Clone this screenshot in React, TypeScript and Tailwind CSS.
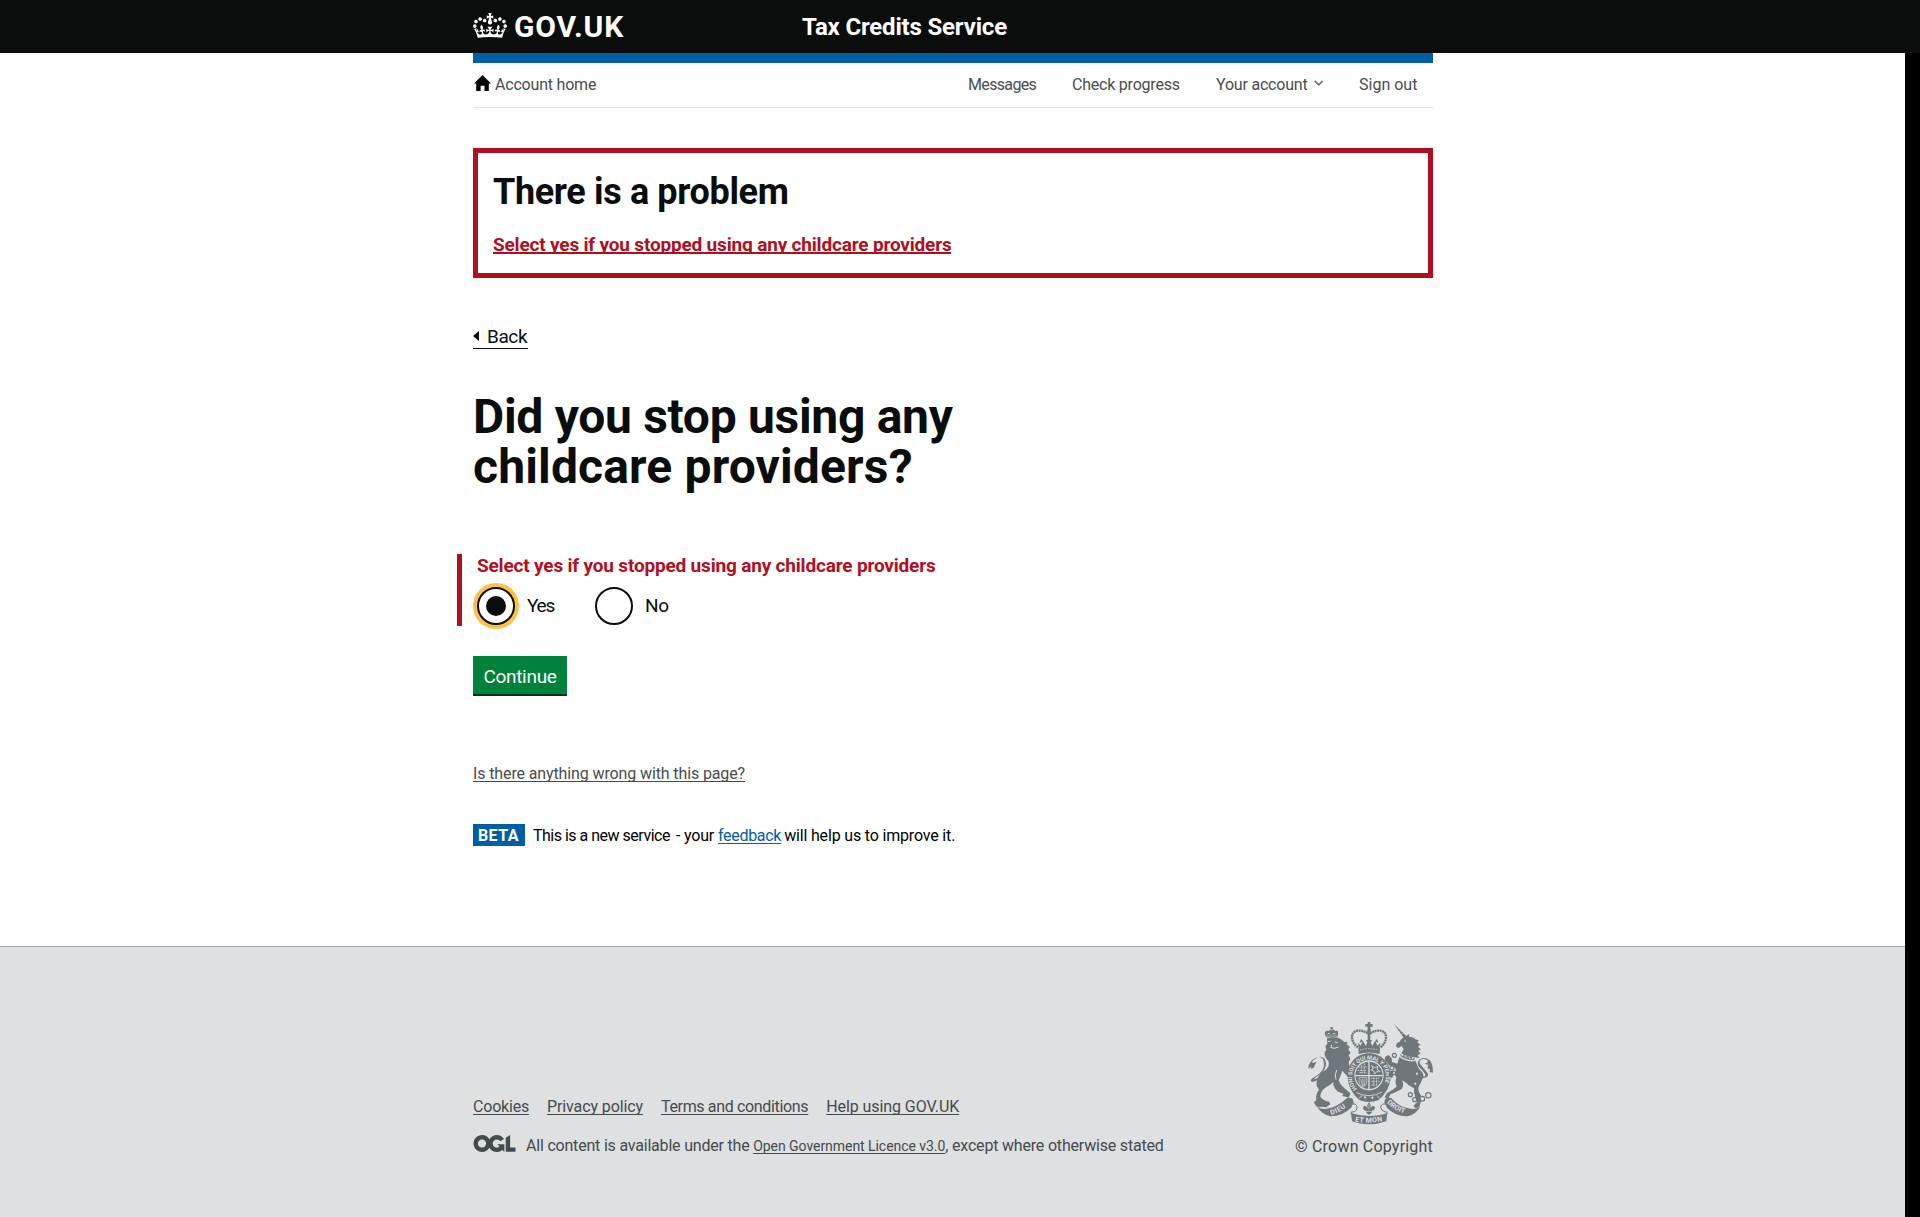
function Crown() {
  return (
    <svg viewBox="0 0 132 97" className="mt-[-2px] h-[25px] w-[34px] shrink-0" fill="currentColor" fillRule="evenodd" aria-hidden="true">
      <path d="M25 30.2c3.5 1.5 7.7-.2 9.1-3.7 1.5-3.6-.2-7.8-3.9-9.2-3.6-1.4-7.6.3-9.1 3.9-1.4 3.5.3 7.5 3.9 9zM9 39.5c3.6 1.5 7.8-.2 9.2-3.7 1.5-3.6-.2-7.8-3.9-9.1-3.6-1.5-7.6.2-9.1 3.8-1.4 3.5.3 7.5 3.8 9zM4.4 57.2c3.5 1.5 7.7-.2 9.1-3.8 1.5-3.6-.2-7.7-3.9-9.1-3.5-1.5-7.6.3-9.1 3.8-1.4 3.5.3 7.6 3.9 9.1zm38.3-21.4c3.5 1.5 7.7-.2 9.1-3.8 1.5-3.6-.2-7.7-3.9-9.1-3.6-1.5-7.6.3-9.1 3.8-1.3 3.6.4 7.7 3.9 9.1zm64.4-5.6c-3.6 1.5-7.8-.2-9.1-3.7-1.5-3.6.2-7.8 3.8-9.2 3.6-1.4 7.7.3 9.2 3.9 1.3 3.5-.4 7.5-3.9 9zm15.9 9.3c-3.6 1.5-7.7-.2-9.1-3.7-1.5-3.6.2-7.8 3.7-9.1 3.6-1.5 7.7.2 9.2 3.8 1.5 3.5-.3 7.5-3.8 9zm4.7 17.7c-3.6 1.5-7.8-.2-9.2-3.8-1.5-3.6.2-7.7 3.9-9.1 3.6-1.5 7.7.3 9.2 3.8 1.3 3.5-.4 7.6-3.9 9.1zM89.3 35.8c-3.6 1.5-7.8-.2-9.2-3.8-1.4-3.6.2-7.7 3.9-9.1 3.6-1.5 7.7.3 9.2 3.8 1.4 3.6-.3 7.7-3.9 9.1zM69.7 17.7l8.9 4.7V9.3l-8.9 2.8c-.2-.3-.5-.6-.9-.9L72.4 0H59.6l3.5 11.2c-.3.3-.6.5-.9.9l-8.8-2.8v13.1l8.8-4.7c.3.3.6.7.9.9l-5 15.4v.1c-.2.8-.4 1.6-.4 2.4 0 4.1 3.1 7.5 7 8.1h.2c.3 0 .7.1 1 .1.4 0 .7 0 1-.1h.2c4-.6 7.1-4.1 7.1-8.1 0-.8-.1-1.7-.4-2.4V34l-5.1-15.4c.4-.2.7-.6 1-.9zM66 92.8c16.9 0 32.8 1.1 47.1 3.2 4-16.9 8.9-26.7 14-33.5l-9.6-3.4c1 4.9 1.1 7.2 0 10.2-1.5-1.4-3-4.3-4.2-8.7L108.6 76c2.8-2 5-3.2 7.5-3.3-4.4 9.4-10 11.9-13.6 11.2-4.3-.8-6.3-4.6-5.6-7.9 1-4.7 5.7-5.9 8-.5 4.3-8.7-3-11.4-7.6-8.8 7.1-7.2 7.9-13.5 2.1-21.1-8 6.1-8.1 12.3-4.5 20.8-4.7-5.4-12.1-2.5-9.5 6.2 3.4-5.2 7.9-2 7.2 3.1-.6 4.3-6.4 7.8-13.5 7.2-10.3-.9-10.9-8-11.2-13.8 2.5-.5 7.1 1.8 11 7.3L80.2 60c-4.1 4.4-8 5.3-12.3 5.4 1.4-4.4 8-11.6 8-11.6H55.5s6.4 7.2 7.9 11.6c-4.2-.1-8-1-12.3-5.4l1.4 16.4c3.9-5.5 8.5-7.7 10.9-7.3-.3 5.8-.9 12.8-11.1 13.8-7.2.6-12.9-2.9-13.5-7.2-.7-5 3.8-8.3 7.1-3.1 2.7-8.7-4.6-11.6-9.4-6.2 3.7-8.5 3.6-14.7-4.6-20.8-5.8 7.6-5 13.9 2.2 21.1-4.7-2.6-11.9.1-7.7 8.8 2.3-5.5 7.1-4.2 8.1.5.7 3.3-1.3 7.1-5.7 7.9-3.5.7-9-1.8-13.5-11.2 2.5.1 4.7 1.3 7.5 3.3l-4.7-15.4c-1.2 4.4-2.7 7.2-4.3 8.7-1.1-3-.9-5.3 0-10.2l-9.5 3.4c5 6.9 9.9 16.7 14 33.5 14.8-2.1 30.8-3.2 47.7-3.2z" />
    </svg>
  );
}

function HomeIcon() {
  return (
    <svg viewBox="0 0 17 16" className="ml-px h-4 w-[17px] shrink-0" fill="#000" aria-hidden="true">
      <path d="M8.500 0 17 8.500h-2.200V16h-4.300v-5.200H6.600V16H2.200V8.500H0z" />
    </svg>
  );
}

function OglLogo() {
  return (
    <svg viewBox="0 0 483.2 195.7" className="mt-[-1px] h-[17px] w-[43px] shrink-0" fill="currentColor" aria-hidden="true">
      <path d="M421.5 142.8V.1l-50.7 32.3v161.1h112.4v-50.7zm-122.3-9.6A47.12 47.12 0 0 1 221 97.8c0-26 21.1-47.1 47.1-47.1 16.700 0 31.400 8.700 39.700 21.800l42.700-27.200A97.630 97.630 0 0 0 268.100 0c-36.500 0-68.300 20.100-85.100 49.700A98 98 0 0 0 97.800 0C43.900 0 0 43.900 0 97.800s43.900 97.800 97.800 97.800c36.500 0 68.300-20.100 85.100-49.700a97.760 97.760 0 0 0 149.600 25.400l19.400 22.200h3v-87.800h-80l24.300 27.500zM97.800 145c-26 0-47.100-21.100-47.100-47.100s21.100-47.100 47.100-47.100 47.100 21.100 47.100 47.100S123.800 145 97.800 145" />
    </svg>
  );
}

const INK = "#6f777b";
const PAPER = "#dee0e2";

function RoyalArms() {
  return (
    <svg viewBox="84 36 375 306" className="h-[102px] w-[125px] overflow-visible" fill={INK} aria-hidden="true">
      <defs>
        <path id="garter" d="M231 236 A51 51 0 1 1 303 236" />
        <path id="motto-left" d="M154 315 Q186 306 212 278" />
        <path id="motto-mid" d="M225 335 Q267 342 313 333" />
        <path id="motto-right" d="M320 278 Q347 306 384 313" />
      </defs>

      {/* lion's crown */}
      <path d="M139 82 C130 66 136 60 146 63 Q152 56 155 62 Q160 55 165 63 Q176 60 174 67 Q176 72 172 82 Z" />
      <circle cx="155" cy="55" r="4" />
      <path d="M143 73 q3 -8 7 0 M159 73 q4 -8 8 0" stroke={PAPER} strokeWidth="3" fill="none" />
      <path d="M138 78 h35" stroke={PAPER} strokeWidth="1.500" />
      {/* lion's head, mane and body */}
      <path d="M141 85 Q156 79 174 83 Q185 87 193 96 L203 95 L200 103 L209 110 L205 119 L212 128 L206 136 L211 147 L206 156 L209 170 Q204 177 214 186 L213 201 L205 207 L202 199 L187 182 Q181 199 176 211 Q182 228 199 239 L211 250 L207 263 L187 258 L190 251 L174 245 Q158 232 160 216 Q150 226 139 231 Q121 242 121 260 Q131 273 148 275 L151 283 L139 292 L125 290 L119 292 L108 289 L102 277 L109 270 Q106 253 117 239 Q105 227 112 207 Q118 189 136 181 Q151 168 145 153 Q133 143 134 125 L139 120 L136 109 L142 101 Z" />
      <path d="M144 95 L152 93 M164 96 L173 98 M151 112 L163 115 L175 111 M155 104 L154 110" stroke={PAPER} strokeWidth="3" fill="none" />
      <path d="M170 180 Q163 195 168 209" stroke={PAPER} strokeWidth="3" fill="none" />
      <path d="M116 208 Q97 220 93 213 Q90 207 105 200 Q132 184 132 165 Q132 140 116 141 Q104 145 94 157 Q104 160 110 154 L101 173 L93 178 L94 170 L84 176 Q87 154 105 145 Q122 135 132 145 Q141 157 136 172 Q131 188 113 198 Q103 204 103 208 Q108 208 120 199 Z" />

      {/* imperial crown */}
      <path d="M263 36 h8 v6 h7 v8 h-7 v8 h-8 v-8 h-7 v-8 h7 z" />
      <circle cx="267" cy="62" r="6" />
      <path d="M234 112 Q218 101 216 84 Q215 66 232 62 Q251 60 267 73 Q283 60 302 62 Q319 66 318 84 Q316 101 301 112" fill="none" stroke={INK} strokeWidth="7" strokeDasharray="6 1.500" />
      <path d="M263 66 h8 v35 h-8 z" />
      <path d="M234 98 L242 107 L247 95 L239 98 L243 86 L252 98 L257 108 L262 98 L258 90 L276 90 L272 98 L277 108 L282 98 L291 86 L295 98 L287 95 L292 107 L301 98 L298 119 L237 119 Z" />
      <path d="M235 115 Q267 106 300 115 L299 132 Q267 123 236 132 Z" />
      <path d="M240 120 Q267 112 295 120" stroke={PAPER} strokeWidth="2" strokeDasharray="5 3" fill="none" />

      {/* garter and shield */}
      <path fillRule="evenodd" d="M267 130 C304 130 332 160 332 198 C332 232 311 257 295 271 Q267 281 239 271 C219 253 203 229 203 197 C203 160 230 130 267 130 Z M267 151 A44 45 0 1 0 267 241 A44 45 0 1 0 267 151 Z" />
      <circle cx="267" cy="196" r="41" />
      <path d="M267 155 v82 M226 197 h82" stroke={PAPER} strokeWidth="4" />
      <path d="M235 171 h26 M233 181 h28 M238 188 h23 M244 164 v25 M253 160 v30" stroke={PAPER} strokeWidth="2.200" strokeDasharray="5 2" />
      <path d="M273 205 h25 M273 215 h27 M273 225 h20 M281 203 v28 M290 203 v24" stroke={PAPER} strokeWidth="2.200" strokeDasharray="5 2" />
      <path d="M275 167 l9 6 10 -4 -3 9 9 7 -10 0 -6 7 -3 -9 -8 -4 7 -3 z" fill="none" stroke={PAPER} strokeWidth="2.500" />
      <path d="M238 203 q-5 20 12 29 q14 -11 10 -29 z M243 207 q0 12 7 22 M249 206 v22 M255 206 q1 13 -3 22" fill="none" stroke={PAPER} strokeWidth="2" />
      <path d="M230 248 Q267 267 306 246 M236 266 l10 -9 M300 266 l-10 -10" fill="none" stroke={PAPER} strokeWidth="2.500" />
      <path d="M251 262 l4 -4 4 4 -4 4 z M273 263 l4 -4 4 4 -4 4 z" fill={PAPER} />
      <text fill={PAPER} fontFamily="Roboto, sans-serif" fontWeight="700" fontSize="17" letterSpacing="-0.3">
        <textPath href="#garter">HONI SOIT QUI MAL Y PENSE</textPath>
      </text>

      {/* unicorn */}
      <path d="M342 42 L379 78 L371 83 Z" />
      <path d="M348 48 l3 0 M353 56 l5 -1 M359 64 l6 -2 M364 72 l8 -3" stroke={PAPER} strokeWidth="1.500" />
      <path d="M380 77 L388 72 L387 80 Q401 80 406 88 L416 91 L412 97 L421 104 L414 110 L423 119 L414 122 L422 131 L413 135 L418 145 L405 142 Q380 141 364 130 L371 118 L365 108 L356 114 L348 110 L350 100 L359 95 Q364 83 380 77 Z" />
      <circle cx="375" cy="93" r="2.500" fill={PAPER} />
      <path d="M361 131 l6 8 5 -8 5 11 7 -9 3 11 8 -7 2 10 8 -5 -2 9 Q381 151 362 139 Z" />
      <path d="M366 133 Q386 148 408 147" stroke={PAPER} strokeWidth="2.500" strokeDasharray="5 3" fill="none" />
      <path d="M358 141 Q383 158 407 153 Q411 168 420 180 Q431 188 430 201 L421 221 Q412 232 417 247 L429 267 L422 277 L418 291 L408 295 L400 288 L411 277 L407 264 Q400 250 402 235 L386 226 Q378 217 366 211 Q373 226 365 237 L343 248 L331 253 L324 268 L314 262 L322 248 L337 240 L350 230 Q344 215 349 203 L343 191 L336 205 L326 195 L327 184 L339 182 L348 184 L346 174 L327 166 L314 150 L315 141 L325 135 L335 145 L336 156 L352 161 Z" />
      <path d="M425 203 Q449 205 443 190 Q434 178 421 163 Q413 149 431 147 Q443 148 444 156 L435 161 L445 165 L442 175 L450 178 L449 186 L459 188 Q459 160 448 150 Q432 139 418 149 Q408 161 420 174 Q437 190 436 197 Q430 201 423 196 Z" />
      <g fill={PAPER} stroke={INK} strokeWidth="3.500">
        <circle cx="343" cy="136" r="6" />
        <circle cx="336" cy="174" r="6" />
        <circle cx="342" cy="189" r="5" />
        <circle cx="411" cy="191" r="5" />
        <circle cx="406" cy="221" r="5" />
        <circle cx="391" cy="254" r="6" />
        <circle cx="404" cy="269" r="6" />
        <circle cx="427" cy="266" r="7" />
        <circle cx="445" cy="256" r="8" />
      </g>

      {/* motto ribbon */}
      <path d="M111 290 Q126 300 147 295 Q175 289 201 264 L216 265 Q226 277 216 291 Q188 319 152 319 Q127 314 111 290 Z" />
      <path d="M421 290 Q405 301 385 295 Q355 289 333 263 L318 265 Q308 277 317 290 Q347 320 382 319 Q407 314 421 290 Z" />
      <path d="M216 283 Q229 279 231 291 Q232 303 219 306 Q214 302 213 312 M318 283 Q304 279 302 291 Q303 303 316 306 Q321 302 322 312" fill={PAPER} stroke={INK} strokeWidth="3" />
      <path d="M213 309 Q239 318 267 318 Q298 318 322 309 L319 334 Q295 343 267 343 Q239 343 216 334 Z" />
      <path d="M267 277 Q275 285 271 295 Q279 283 284 290 Q287 298 276 303 L275 308 L267 315 L259 308 L258 303 Q247 298 250 290 Q255 283 263 295 Q259 285 267 277 Z" />
      <path d="M258 304 h18 M267 283 v14" stroke={PAPER} strokeWidth="2" />
      <g fill={PAPER} fontFamily="Roboto, sans-serif" fontWeight="700" fontSize="21">
        <text letterSpacing="1.500"><textPath href="#motto-left">DIEU</textPath></text>
        <text letterSpacing="1"><textPath href="#motto-mid">ET MON</textPath></text>
        <text letterSpacing="0.500"><textPath href="#motto-right">DROIT</textPath></text>
      </g>
    </svg>
  );
}

const fine = "underline decoration-1 underline-offset-[2px] [text-decoration-skip-ink:none]";

export default function App() {
  return (
    <div className="h-[1217px] w-[1920px] overflow-hidden bg-black font-[Roboto,sans-serif] text-base leading-5 text-[#0b0c0c]">
      <div className="flex h-full w-[1905px] flex-col bg-white">
        <header className="-mr-[15px] h-[53px] bg-[#0b0c0c] text-white">
          <div className="ml-[473px] flex h-[53px] w-[960px] items-center font-bold leading-[53px]">
            <a className="flex w-[329px] items-center">
              <Crown />
              <span className="ml-[7px] text-[30px] tracking-[0.9px]">GOV.UK</span>
            </a>
            <span className="pt-[2px] text-2xl leading-[53px] tracking-[-0.18px]">Tax Credits Service</span>
          </div>
        </header>

        <main className="ml-[473px] w-[960px]">
          <div className="h-[10px] bg-[#005ea5]" />
          <nav className="flex h-[45px] items-start border-b border-[#dee0e2] leading-[43px] text-[#494c4e]">
            <a className="flex gap-1 tracking-[-0.2px]">
              <span className="flex pt-[12px]"><HomeIcon /></span>
              Account home
            </a>
            <div className="ml-auto flex gap-9 pr-4">
              <a className="w-[68px] whitespace-nowrap tracking-[-0.65px]">Messages</a>
              <a className="w-[108px] whitespace-nowrap tracking-[-0.22px]">Check progress</a>
              <a className="flex w-[107px] items-start whitespace-nowrap tracking-[-0.2px]">
                Your account
                <svg viewBox="0 0 10 6" className="ml-[6px] mt-[17px] h-[6px] w-[10px]" fill="none" stroke="#6f777b" strokeWidth="1.800" aria-hidden="true">
                  <path d="M.7.700 5 5 9.300.700" />
                </svg>
              </a>
              <a className="w-[58px] whitespace-nowrap">Sign out</a>
            </div>
          </nav>

          <section className="mt-10 h-[130px] border-[5px] border-[#b10e1e] px-[15px] pt-[19px]">
            <h2 className="text-4xl leading-10 font-bold tracking-[-0.36px]">There is a problem</h2>
            <a className="mt-[21px] block h-[21px] w-[458px] overflow-hidden border-b-2 border-[#b10e1e] text-[19px] leading-6 font-bold whitespace-nowrap tracking-[-0.18px] text-[#b10e1e]">
              Select yes if you stopped using any childcare providers
            </a>
          </section>

          <a className="mt-[46px] flex h-[25px] w-[55px] items-start border-b border-[#0b0c0c] text-[19px] leading-[26px] tracking-[-0.4px]">
            <svg viewBox="0 0 6 10" className="mt-[7px] mr-2 h-[10px] w-[6px] shrink-0" fill="currentColor" aria-hidden="true">
              <path d="M6 0v10L0 5z" />
            </svg>
            Back
          </a>

          <h1 className="mt-[43px] w-[640px] text-5xl leading-[50px] font-bold">
            <span className="tracking-[-0.3px]">Did you stop using any</span>
            <br />
            <span className="tracking-[0.15px]">childcare providers?</span>
          </h1>

          <fieldset className="mt-[62px] -ml-4 h-[72px] border-l-[5px] border-[#b10e1e] pl-[15px] text-[19px] leading-6">
            <p className="font-bold whitespace-nowrap tracking-[-0.18px] text-[#b10e1e]">
              Select yes if you stopped using any childcare providers
            </p>
            <div className="mt-[9px] flex">
              <label className="flex w-[118px] items-center tracking-[-1.2px]">
                <span className="mr-[12px] flex size-[38px] items-center justify-center rounded-full border-2 border-[#0b0c0c] bg-white shadow-[0_0_0_4px_#ffbf47]">
                  <span className="size-5 rounded-full bg-[#0b0c0c]" />
                </span>
                Yes
              </label>
              <label className="flex items-center tracking-[-0.2px]">
                <span className="mr-[12px] size-[38px] rounded-full border-2 border-[#0b0c0c] bg-white" />
                No
              </label>
            </div>
          </fieldset>

          <button className="mt-[30px] block h-10 w-[94px] border-b-2 border-[#003618] bg-[#00823b] text-center text-[19px] leading-[41px] tracking-[-0.3px] text-white">
            Continue
          </button>

          <p className="mt-[68px] text-[#494c4e]">
            <a className={fine + " tracking-[-0.12px]"}>Is there anything wrong with this page?</a>
          </p>

          <div className="mt-10 flex h-[22px] items-center leading-6 whitespace-nowrap text-black">
            <strong className="mr-[8px] h-[22px] w-[52px] bg-[#005ea5] pl-[5px] tracking-[0.4px] text-white">BETA</strong>
            <span className="w-[143px] pt-px tracking-[-0.5px]">This is a new service</span>
            <span className="w-[42px] pt-px tracking-[-0.2px]">- your</span>
            <a className={fine + " mr-[3px] pt-px tracking-[-0.3px] text-[#005ea5]"}>feedback</a>
            <span className="pt-px tracking-[-0.17px]">will help us to improve it.</span>
          </div>
        </main>

        <footer className="mt-[100px] flex flex-1 items-start border-t border-[#a1acb2] bg-[#dee0e2] pt-[75px] pl-[473px] whitespace-nowrap text-[#454a4d]">
          <div className="mt-[75px] w-[800px]">
            <nav className="flex gap-[18px]">
              <a className={fine + " tracking-[-0.2px]"}>Cookies</a>
              <a className={fine + " tracking-[-0.11px]"}>Privacy policy</a>
              <a className={fine + " tracking-[-0.34px]"}>Terms and conditions</a>
              <a className={fine + " tracking-[-0.08px]"}>Help using GOV.UK</a>
            </nav>
            <div className="mt-[19px] flex">
              <OglLogo />
              <p className="ml-[10px]">
                <span className="tracking-[-0.2px]">All content is available under the </span>
                <a className={fine + " text-sm leading-5 tracking-[-0.05px]"}>Open Government Licence v3.0</a>
                <span className="tracking-[-0.19px]">, except where otherwise stated</span>
              </p>
            </div>
          </div>
          <div className="flex w-[160px] flex-col items-end">
            <RoyalArms />
            <p className="mt-[13px] tracking-[0.2px]">© Crown Copyright</p>
          </div>
        </footer>
      </div>
    </div>
  );
}
